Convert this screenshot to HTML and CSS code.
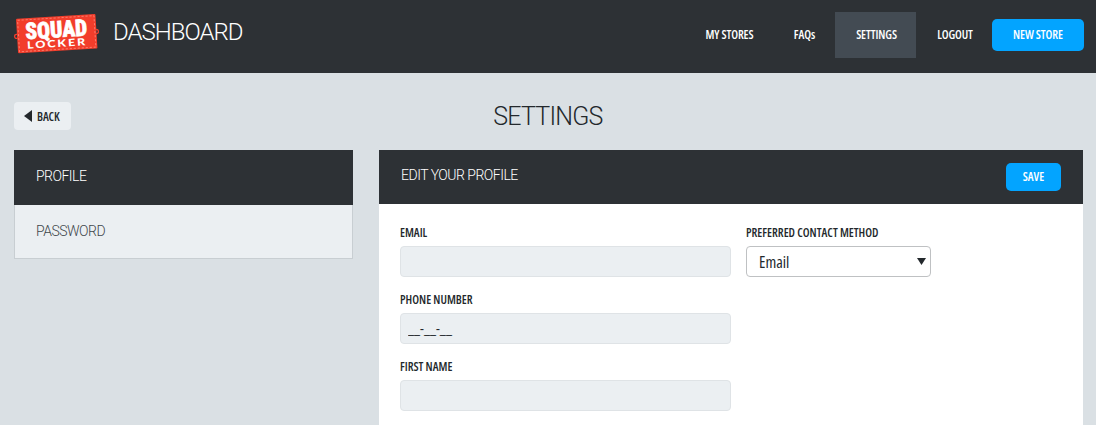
FILE: index.html
```
<!DOCTYPE html>
<html>

<head>
    <meta charset="utf-8">
    <title>Settings</title>
    <link rel="stylesheet" href="styles.css">
</head>

<body>
    <header class="topbar">
        <svg class="logo" width="86" height="44" viewBox="0 0 86 44">
            <g transform="rotate(-3.5 43 22)">
                <circle cx="3.500" cy="22" r="2" fill="none" stroke="#f03e2c" stroke-width="1.3" />
                <circle cx="83.5" cy="22" r="2" fill="none" stroke="#f03e2c" stroke-width="1.3" />
                <rect x="4" y="4.500" width="79.500" height="34.500" rx="1" fill="#f23d2b" />
                <rect x="5.500" y="6" width="76.500" height="31.500" fill="none" stroke="#ff8a7a" stroke-width=".8" stroke-dasharray="2.200 1.800" />
                <text class="logo-big" x="12.500" y="25.500" textLength="62" lengthAdjust="spacingAndGlyphs">SQUAD</text>
                <text class="logo-small" x="13.500" y="35" textLength="60" lengthAdjust="spacingAndGlyphs">LOCKER</text>
            </g>
        </svg>
        <h1 class="app-title">DASHBOARD</h1>
        <nav class="nav">
            <a class="nav-item stores">MY STORES</a>
            <a class="nav-item faqs">FAQs</a>
            <a class="nav-item settings active">SETTINGS</a>
            <a class="nav-item logout">LOGOUT</a>
            <a class="button new-store">NEW STORE</a>
        </nav>
    </header>

    <div class="page-head">
        <a class="back">
            <svg width="8" height="12" viewBox="0 0 8 12"><path d="M8 0v12L0 6z" fill="#23282c" /></svg>
            <span>BACK</span>
        </a>
        <h2 class="page-title">SETTINGS</h2>
    </div>

    <div class="columns">
        <ul class="side">
            <li class="side-item active">PROFILE</li>
            <li class="side-item">PASSWORD</li>
        </ul>
        <form class="panel">
            <div class="panel-head">
                <span>EDIT YOUR PROFILE</span>
                <button type="button" class="button save">SAVE</button>
            </div>
            <div class="panel-body">
                <div class="fields">
                    <label class="label email" for="email">EMAIL</label>
                    <input class="input" id="email" type="text">
                    <label class="label phone" for="phone">PHONE NUMBER</label>
                    <input class="input" id="phone" type="text" value="__-__-__">
                    <label class="label first" for="first">FIRST NAME</label>
                    <input class="input" id="first" type="text">
                </div>
                <div class="contact">
                    <label class="label method" for="contact">PREFERRED CONTACT METHOD</label>
                    <div class="select" id="contact">
                        <span>Email</span>
                        <svg width="9" height="7" viewBox="0 0 9 7"><path d="M0 0h9L4.500 7z" fill="#23282c" /></svg>
                    </div>
                </div>
            </div>
        </form>
    </div>
</body>

</html>
```

FILE: styles.css
```
* {
    box-sizing: border-box;
}

body {
    margin: 0;
    background: #dae0e4;
    color: #23282c;
    font-family: "Open Sans", "Noto Sans", sans-serif;
    font-stretch: 75%;
    font-size: 12px;
    font-weight: 600;
}

.topbar {
    display: flex;
    align-items: flex-start;
    height: 73px;
    padding: 12px 12px 0 13px;
    background: #2d3135;
}

.logo {
    display: block;
}

.logo-big {
    font-family: Roboto, sans-serif;
    font-size: 23px;
    font-weight: 900;
    fill: #fff;
    stroke: #fff;
    stroke-width: .6;
}

.logo-small {
    font-family: Lato, sans-serif;
    font-size: 10px;
    font-weight: 900;
    letter-spacing: 1.5px;
    fill: #fff;
}

.app-title {
    margin: 5px 0 0 14px;
    font: 300 24px/30px Roboto, sans-serif;
    letter-spacing: -1px;
    color: #fff;
}

.nav {
    display: flex;
    align-items: center;
    height: 46px;
    margin-left: auto;
    color: #fff;
    letter-spacing: -.1px;
}

.nav-item {
    height: 46px;
    padding-left: 2px;
    line-height: 46px;
    text-align: center;
    white-space: nowrap;
}

.stores {
    width: 87px;
}

.faqs {
    width: 63px;
}

.settings {
    width: 81px;
}

.logout {
    width: 76px;
}

.nav-item.active {
    background: #434b53;
}

.button {
    border: 0;
    border-radius: 5px;
    background: #03a4ff;
    color: #fff;
    font: inherit;
    text-align: center;
}

.new-store {
    width: 92px;
    height: 32px;
    line-height: 32px;
}

.page-head {
    display: grid;
    grid-template-columns: 1fr auto 1fr;
    height: 77px;
    padding: 29px 14px 0;
}

.back {
    display: flex;
    align-items: center;
    gap: 5px;
    width: 57px;
    height: 28px;
    padding-left: 10px;
    border-radius: 4px;
    background: #ebeff2;
    letter-spacing: -.1px;
}

.page-title {
    margin: 0;
    font: 300 25px/30px Roboto, sans-serif;
    letter-spacing: -.8px;
}

.columns {
    display: flex;
    align-items: flex-start;
    gap: 26px;
    padding: 0 13px 0 14px;
}

.side {
    width: 339px;
    margin: 0;
    padding: 0;
    list-style: none;
    font: 300 14px/52px Roboto, sans-serif;
    letter-spacing: -.5px;
}

.side-item {
    height: 54px;
    padding-left: 21px;
    border: 1px solid #c8ced2;
    border-top: 0;
    background: #ebeff2;
    color: #41474c;
}

.side-item.active {
    height: 55px;
    border-color: #2d3135;
    background: #2d3135;
    color: #fff;
}

.panel {
    flex: 1;
    height: 275px;
    background: #fff;
}

.panel-head {
    display: flex;
    justify-content: space-between;
    height: 54px;
    padding: 13px 22px 0;
    background: #2d3135;
    color: #fff;
    font: 300 14px/25px Roboto, sans-serif;
    letter-spacing: -.5px;
}

.save {
    width: 55px;
    height: 28px;
    padding: 0 0 2px;
    font: 600 12px "Open Sans", sans-serif;
    font-stretch: 75%;
}

.panel-body {
    display: flex;
    gap: 15px;
    padding: 20px 21px 0;
}

.fields {
    width: 331px;
}

.label {
    display: block;
    width: max-content;
    height: 22px;
    line-height: 18px;
}

.input {
    display: block;
    width: 100%;
    height: 31px;
    margin: 0 0 14px;
    padding: 0 7px;
    border: 1px solid #dfe3e6;
    border-radius: 4px;
    background: #ebeff2;
    color: #23282c;
    font: 400 14px "Open Sans", sans-serif;
    font-stretch: 75%;
}

.input:last-child {
    margin-bottom: 0;
}

.select {
    display: flex;
    align-items: center;
    justify-content: space-between;
    width: 185px;
    height: 31px;
    padding: 0 4px 0 12px;
    border: 1px solid #bfc1c3;
    border-radius: 4px;
    font-size: 16px;
    font-weight: 400;
}
```
